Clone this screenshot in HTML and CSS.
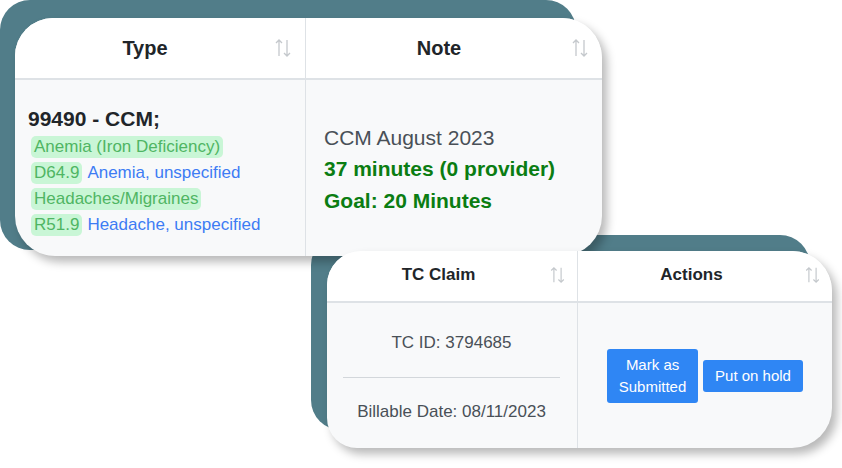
FILE: index.html
```html
<!DOCTYPE html>
<html lang="en">
<head>
<meta charset="UTF-8" />
<meta name="viewport" content="width=device-width, initial-scale=1" />
<title>CCM billing</title>
<link rel="stylesheet" href="styles.css">
</head>
<body>

<div class="board">

  <div class="frame frame-top">
    <div class="sheet sheet-top">
      <div class="head-cell">
        <span class="head-label">Type</span>
        <svg class="sort" viewBox="0 0 16 20"><path d="M4 18V2M1 5l3-3 3 3M12 2v16M9 15l3 3 3-3" /></svg>
      </div>
      <div class="head-cell">
        <span class="head-label">Note</span>
        <svg class="sort" viewBox="0 0 16 20"><path d="M4 18V2M1 5l3-3 3 3M12 2v16M9 15l3 3 3-3" /></svg>
      </div>
      <div class="body-cell type-cell">
        <div class="code">99490 - CCM;</div>
        <div class="dx-line"><span class="tag">Anemia (Iron Deficiency)</span></div>
        <div class="dx-line"><span class="tag">D64.9</span><span class="dx">Anemia, unspecified</span></div>
        <div class="dx-line"><span class="tag">Headaches/Migraines</span></div>
        <div class="dx-line"><span class="tag">R51.9</span><span class="dx">Headache, unspecified</span></div>
      </div>
      <div class="body-cell note-cell">
        <div>CCM August 2023</div>
        <div class="minutes">37 minutes (0 provider)</div>
        <div class="minutes">Goal: 20 Minutes</div>
      </div>
    </div>
  </div>

  <div class="frame frame-bottom">
    <div class="sheet sheet-bottom">
      <div class="head-cell">
        <span class="head-label">TC Claim</span>
        <svg class="sort" viewBox="0 0 16 20"><path d="M4 18V2M1 5l3-3 3 3M12 2v16M9 15l3 3 3-3" /></svg>
      </div>
      <div class="head-cell">
        <span class="head-label">Actions</span>
        <svg class="sort" viewBox="0 0 16 20"><path d="M4 18V2M1 5l3-3 3 3M12 2v16M9 15l3 3 3-3" /></svg>
      </div>
      <div class="body-cell claim-cell">
        <div class="claim-line">TC ID: 3794685</div>
        <hr class="claim-rule">
        <div class="claim-line">Billable Date: 08/11/2023</div>
      </div>
      <div class="body-cell actions-cell">
        <button class="btn btn-submit">Mark as Submitted</button>
        <button class="btn">Put on hold</button>
      </div>
    </div>
  </div>

</div>

</body>
</html>
```

FILE: styles.css
```css
  body {
    margin: 0;
    padding: 0;
    background-color: white;
    font-family: "Liberation Sans", Arial, sans-serif;
    color: #212529;
    overflow: hidden;
  }
  .board {
    width: 842px;
    height: 468px;
  }

  /* teal backing plate, the white sheet sits on it shifted down-right */
  .frame {
    display: flow-root;
    background-color: #517d89;
    border-radius: 30px;
    box-sizing: border-box;
  }
  .frame-top {
    width: 576px;
    padding: 18px 0 0 15px;
  }
  .frame-bottom {
    width: 499px;
    margin: -15px 0 0 311px;
    padding: 16px 0 0 16px;
  }

  .sheet {
    display: grid;
    background-color: #f8f9fa;
    border-radius: 40px;
    overflow: hidden;
    box-shadow: 5px 6px 10px rgba(0, 0, 0, 0.28);
    position: relative;
  }
  .sheet-top {
    grid-template-columns: 290px 297px;
    grid-template-rows: 62px 176px;
    margin: 0 -26px -6px 0;
    border-top-left-radius: 38px;
  }
  .sheet-bottom {
    grid-template-columns: 250px 255px;
    grid-template-rows: 52px 145px;
    margin: 0 -22px -18px 0;
    border-radius: 34px 40px 40px 30px;
  }

  .head-cell {
    display: flex;
    align-items: center;
    background-color: white;
    border-bottom: 2px solid #dee2e6;
    padding-right: 14px;
    font-weight: bold;
  }
  .head-cell + .head-cell,
  .body-cell + .body-cell {
    border-left: 1px solid #dee2e6;
  }
  .head-label {
    flex: 1;
    text-align: center;
  }
  .sort {
    width: 16px;
    height: 20px;
    fill: none;
    stroke: #c4c8cc;
    stroke-width: 1.3;
  }
  .sheet-top .head-cell {
    font-size: 20px;
  }
  .sheet-bottom .head-cell {
    font-size: 17px;
    padding-right: 12px;
    padding-bottom: 3px;
  }
  .sheet-bottom .sort {
    width: 15px;
    height: 18px;
  }

  .body-cell {
    display: flex;
    flex-direction: column;
    justify-content: center;
  }

  .type-cell {
    padding: 6px 13px 0;
    font-size: 17px;
  }
  .code {
    font-size: 21px;
    font-weight: bold;
    line-height: 30px;
  }
  .dx-line {
    height: 26px;
    display: flex;
    align-items: center;
    gap: 5px;
    padding-left: 3px;
  }
  .tag {
    background-color: #c9f6d6;
    color: #4fb563;
    border-radius: 5px;
    padding: 0 3px;
    line-height: 22px;
  }
  .dx {
    color: #3d7cf4;
  }

  .note-cell {
    padding: 2px 18px 0;
    font-size: 21px;
    line-height: 31.5px;
    color: #495057;
  }
  .minutes {
    color: #0b7d12;
    font-weight: bold;
  }

  .claim-cell {
    padding: 4px 17px 0 16px;
    font-size: 17px;
    color: #495057;
    text-align: center;
  }
  .claim-line {
    line-height: 24px;
  }
  .claim-rule {
    width: 100%;
    margin: 22px 0;
    border: none;
    border-top: 1px solid #d3d7db;
  }

  .actions-cell {
    flex-direction: row;
    align-items: center;
    justify-content: center;
    gap: 5px;
  }
  .btn {
    background-color: #2f86f4;
    border: none;
    border-radius: 3px;
    color: white;
    font-family: inherit;
    font-size: 15px;
    line-height: 22px;
    padding: 5px 12px;
    cursor: pointer;
  }
  .btn-submit {
    width: 91px;
    padding: 5px 8px;
  }
```
